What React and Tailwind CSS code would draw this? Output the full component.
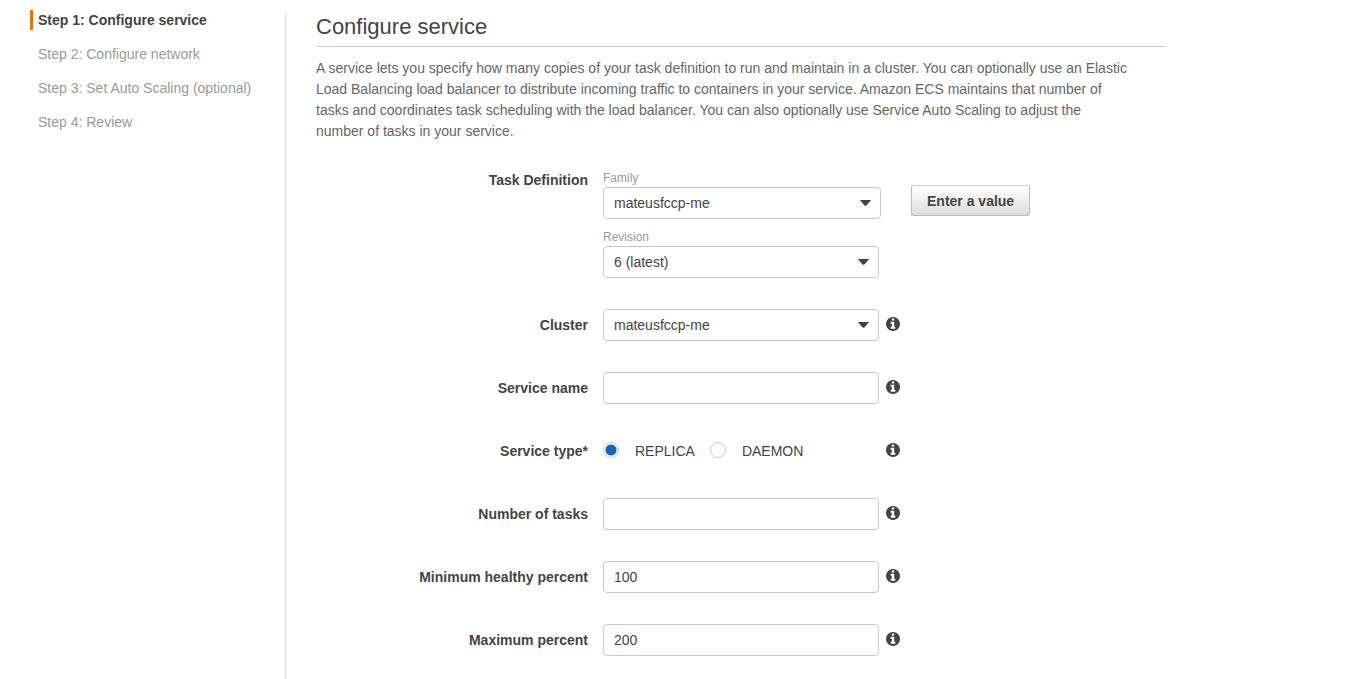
import { useId } from "react";

const steps = [
  "Step 1: Configure service",
  "Step 2: Configure network",
  "Step 3: Set Auto Scaling (optional)",
  "Step 4: Review",
];

function InfoButton({ topic }) {
  return (
    <button type="button" aria-label={`About ${topic}`} className="shrink-0 pb-0.5 text-[#444]">
      <svg viewBox="0 128 1536 1536" className="block size-3.5 fill-current" aria-hidden="true">
        <path d="M1024 1376v-160q0-14-9-23t-23-9h-96v-512q0-14-9-23t-23-9h-320q-14 0-23 9t-9 23v160q0 14 9 23t23 9h96v320h-96q-14 0-23 9t-9 23v160q0 14 9 23t23 9h448q14 0 23-9t9-23zM896 480v-160q0-14-9-23t-23-9h-192q-14 0-23 9t-9 23v160q0 14 9 23t23 9h192q14 0 23-9t9-23zM1536 896q0 209-103 385.5t-279.5 279.5-385.5 103-385.5-103-279.5-279.5-103-385.5 103-385.5 279.5-279.5 385.5-103 385.5 103 279.5 279.5 103 385.5z" />
      </svg>
    </button>
  );
}

function Select({ id, value, className = "max-w-[276px]" }) {
  return (
    <div className={`relative w-full ${className}`}>
      <select
        id={id}
        defaultValue={value}
        className="block h-8 w-full appearance-none rounded border border-[#c8c8c8] bg-white pr-8 pl-2.5 text-[#444]"
      >
        <option>{value}</option>
      </select>
      <svg
        viewBox="0 0 12 6"
        preserveAspectRatio="none"
        className="pointer-events-none absolute top-[13px] right-2.5 h-1.5 w-[11px] fill-[#444]"
        aria-hidden="true"
      >
        <path d="M.5 0h11q.7 0 .2.6L7 5.4q-1 .9-2 0L.3.6Q-.2 0 .5 0Z" />
      </svg>
    </div>
  );
}

function TextInput({ id, value = "" }) {
  return (
    <input
      id={id}
      type="text"
      defaultValue={value}
      className="block h-8 w-full max-w-[276px] rounded border border-[#c8c8c8] bg-white px-2.5 text-[#444]"
    />
  );
}

function Row({ label, children }) {
  const id = useId();
  return (
    <div className="grid grid-cols-[32%_1fr] items-center gap-x-[15px]">
      <label htmlFor={id} className="text-right font-bold">
        {label}
      </label>
      <div className="flex items-center gap-[7px]">
        {children(id)}
        <InfoButton topic={label} />
      </div>
    </div>
  );
}

function Radio({ id, label, checked }) {
  return (
    <label className="flex items-center gap-4">
      <input
        id={id}
        type="radio"
        name="service-type"
        defaultChecked={checked}
        className="mb-0.5 size-4 appearance-none rounded-full border border-[#c8c8c8] bg-white checked:bg-[radial-gradient(circle,#1166bb_5px,white_6px)]"
      />
      {label}
    </label>
  );
}

export default function App() {
  return (
    <div className="flex min-h-screen bg-white font-['Liberation_Sans',Arial,sans-serif] text-[14px] leading-5 text-[#444]">
      <nav aria-label="Steps" className="w-[285px] shrink-0 pt-2.5 pl-[30px]">
        <ol className="flex flex-col gap-3.5">
          {steps.map((step, i) => (
            <li key={step}>
              <a
                href="#"
                aria-current={i === 0 ? "step" : undefined}
                className={
                  i === 0
                    ? "block border-l-3 border-[#e07700] pl-[5px] font-bold"
                    : "block border-l-3 border-transparent pl-[5px] text-[#999]"
                }
              >
                {step}
              </a>
            </li>
          ))}
        </ol>
      </nav>

      <main className="mt-[13px] min-w-0 flex-1 border-l border-[#ddd] pr-[30px] pb-5 pl-[30px]">
        <div className="max-w-[850px]">
          <h1 className="border-b border-[#ccc] pb-[5px] text-[22px] leading-7">Configure service</h1>
          <p className="mt-[11px] max-w-[814px] leading-[21px] text-[#666]">
            A service lets you specify how many copies of your task definition to run and maintain in a cluster. You can
            optionally use an Elastic Load Balancing load balancer to distribute incoming traffic to containers in your
            service. Amazon ECS maintains that number of tasks and coordinates task scheduling with the load balancer.
            You can also optionally use Service Auto Scaling to adjust the number of tasks in your service.
          </p>

          <form className="mt-7 flex flex-col gap-[31px]">
            <fieldset aria-labelledby="task-definition" className="grid grid-cols-[32%_1fr] gap-x-[15px]">
              <div id="task-definition" className="text-right font-bold">
                Task Definition
              </div>
              <div className="flex flex-col gap-2.5">
                <div className="flex items-end gap-[30px]">
                  <div className="w-full max-w-[278px]">
                    <label htmlFor="family" className="block text-xs leading-[17px] text-[#999]">
                      Family
                    </label>
                    <Select id="family" value="mateusfccp-me" className="max-w-[278px]" />
                  </div>
                  <button
                    type="button"
                    className="mb-[3px] h-[31px] shrink-0 rounded-[3px] border border-[#b8b8b8] border-t-[#d0d0d0] bg-linear-to-b from-white to-[#ddd] px-[15px] font-bold"
                  >
                    Enter a value
                  </button>
                </div>
                <div>
                  <label htmlFor="revision" className="block text-xs leading-[17px] text-[#999]">
                    Revision
                  </label>
                  <Select id="revision" value="6 (latest)" />
                </div>
              </div>
            </fieldset>

            <Row label="Cluster">{(id) => <Select id={id} value="mateusfccp-me" />}</Row>
            <Row label="Service name">{(id) => <TextInput id={id} />}</Row>
            <Row label="Service type*">
              {(id) => (
                <div
                  role="radiogroup"
                  aria-label="Service type"
                  className="flex h-8 w-full max-w-[276px] items-center gap-[15px]"
                >
                  <Radio id={id} label="REPLICA" checked />
                  <Radio label="DAEMON" />
                </div>
              )}
            </Row>
            <Row label="Number of tasks">{(id) => <TextInput id={id} />}</Row>
            <Row label="Minimum healthy percent">{(id) => <TextInput id={id} value="100" />}</Row>
            <Row label="Maximum percent">{(id) => <TextInput id={id} value="200" />}</Row>
          </form>
        </div>
      </main>
    </div>
  );
}
